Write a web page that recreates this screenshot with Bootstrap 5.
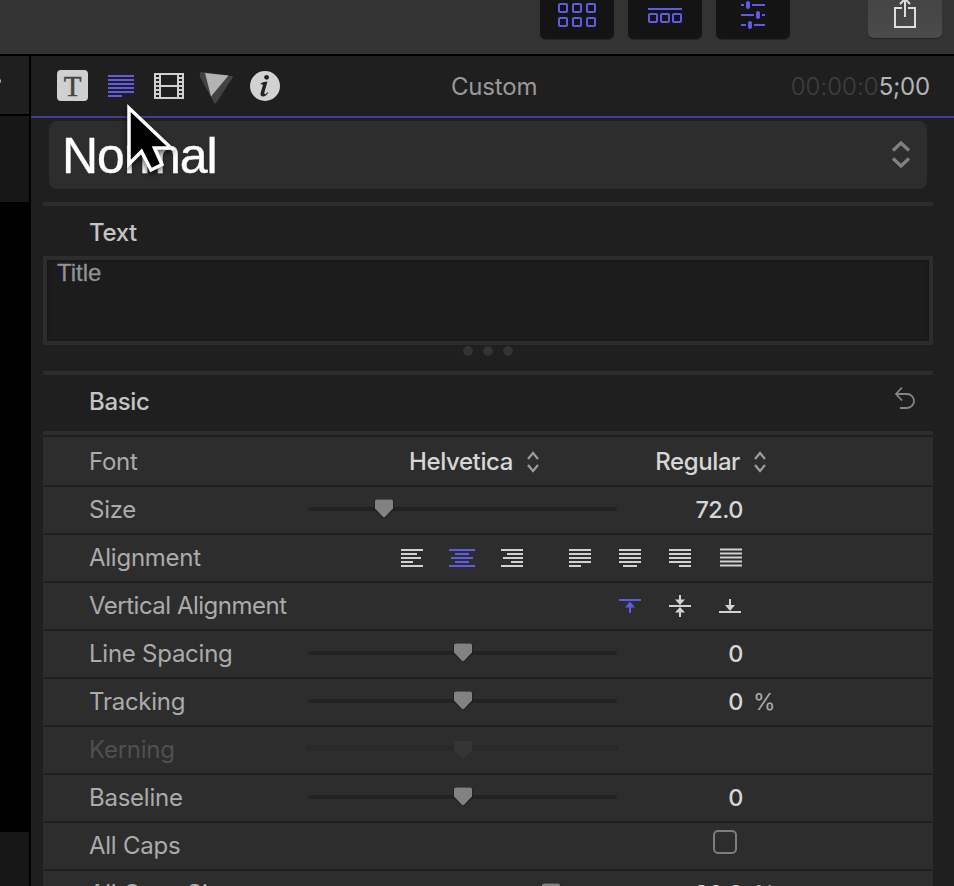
<!DOCTYPE html>
<html lang="en" data-bs-theme="dark">
<head>
<meta charset="utf-8">
<meta name="viewport" content="width=device-width, initial-scale=1">
<title>Title Inspector</title>
<link href="https://cdn.jsdelivr.net/npm/bootstrap@5.3.0/dist/css/bootstrap.min.css" rel="stylesheet">
<style>
  :root { --accent:#5e5ce6; --panel:#1f1f1f; --row:#2d2d2d; --label:#ababab; --bright:#d6d6d6; }
  body { font-family:Inter,"Liberation Sans",sans-serif; font-size:24px; line-height:30px; background:#000; color:var(--label); height:886px; }
  svg { display:block; flex:none; }
  .app { height:886px; }
  .workarea { min-height:0; }
  .topbar { height:56px; background:#333; border-bottom:2px solid #000; padding-right:12px; gap:14px; }
  .tool { width:74px; height:40px; padding:0; border:0; border-radius:0 0 6px 6px; background:#141414; border-bottom:1px solid #252525; color:var(--accent); }
  .tool-share { margin-left:64px; height:39px; background:linear-gradient(#444,#4b4b4b); border-bottom:1px solid #222; color:#ddd; }
  .side { width:31px; border-right:2px solid #000; }
  .side-head { height:60px; background:var(--panel); border-bottom:2px solid #000; }
  .side-strip { height:86px; background:#171717; }
  .side-foot { height:54px; background:#171717; }
  .inspector { background:var(--panel); }
  .tabs { height:62px; border-bottom:2px solid #413f94; padding-left:18px; }
  .tabs-title { letter-spacing:-.2px; margin-left:162px; padding-top:2px; color:#999; }
  .timecode { letter-spacing:.05px; color:#404040; font-weight:300; padding:2px 24px 0 0; }
  .timecode span { letter-spacing:-.2px; color:#b4b4b4; font-weight:400; }
  .preset { margin:3px 27px 13px 18px; height:68px; border-radius:8px; background:var(--row); padding:0 16px 0 13px; color:#fff; font:50px/68px "Liberation Sans",Arial,sans-serif; letter-spacing:-1.1px; }
  .preset span { padding-top:1px; -webkit-text-stroke:.4px #fff; }
  .content { margin:0 21px 0 12px; }
  .rule { height:4px; background:var(--row); }
  .heading { padding:12px 0 0 46px; color:#c4c4c4; font-weight:500; letter-spacing:-.35px; }
  .heading-text { height:50px; }
  .heading-basic { height:56px; }
  .heading svg { margin-top:-1px; }
  .editor { height:89px; border:4px solid var(--row); background:#1c1c1c; box-shadow:inset 0 0 3px #111; padding-left:10px; color:#929292; font:24px/25px "Liberation Sans",Arial,sans-serif; -webkit-text-stroke:.3px #929292; }
  .grip { height:26px; gap:10px; padding-top:1px; }
  .grip i { width:10px; height:10px; border-radius:50%; background:#333; }
  .prop { height:46px; margin-bottom:2px; background:var(--row); display:grid; grid-template-columns:219px 309px 125px 1fr; padding-left:46px; align-items:center; }
  .prop-font { height:48px; margin-top:2px; padding-top:1px; }
  .prop > .name { white-space:nowrap; letter-spacing:-.25px; }
  .prop > .name-long { letter-spacing:-.5px; }
  .val { text-align:right; color:var(--bright); font-weight:500; font-size:23.5px; letter-spacing:-.5px; margin-right:-1px; }
  .unit { padding-left:11px; font-size:23px; }
  .pick { color:var(--bright); font-weight:500; letter-spacing:-.4px; }
  .pick svg { margin-left:14px; }
  .picks { grid-column:2 / span 3; padding:0 167px 0 101px; }
  .icons { grid-column:2 / span 3; padding-left:79px; color:#d2d2d2; }
  .icons-v { padding-left:297px; }
  .icons .gap18 { margin-left:18px; }
  .icons .on { color:var(--accent); }
  .slide { position:relative; height:4px; margin-top:-2px; border-radius:2px; background:#222; }
  .slide svg { position:absolute; top:-9px; margin-left:-11px; color:#828282; }
  .off .name { color:#505050; }
  .off .slide { background:#292929; height:6px; margin:-4px -2px 0; border-radius:3px; }
  .off .slide svg { color:#353535; top:-5px; }
  .box { width:24px; height:24px; border:2px solid #7d7d7d; border-radius:5px; justify-self:end; margin:-8px 5px 0 0; }
  .pointer { position:absolute; left:117px; top:95px; filter:drop-shadow(0 3px 3px rgba(0,0,0,.65)); }
</style>
<script src="https://cdn.jsdelivr.net/npm/bootstrap@5.3.0/dist/js/bootstrap.bundle.min.js"></script>
</head>
<body class="overflow-hidden">
<svg width="0" height="0" class="position-absolute">
  <symbol id="knob" viewBox="0 0 22 22"><path d="M3.500 1h15q2 0 2 2v8.500L13 19.200q-2 1.800-4 0L1.500 11.500V3q0-2 2-2Z" fill="#1b1b1b"/><path d="M3.500 1.500h15q1.500 0 1.500 1.500v7.500L12.200 18.800q-1.200 1-2.400 0L2 10.500V3q0-1.500 1.500-1.500Z" fill="currentColor"/></symbol>
  <symbol id="updown" viewBox="0 0 12 22"><path d="M1 8 6 2l5 6M1 14l5 6 5-6" fill="none" stroke="#9c9c9c" stroke-width="2.200"/></symbol>
</svg>
<div class="app d-flex flex-column position-relative overflow-hidden">
  <header class="topbar d-flex justify-content-end align-items-start flex-shrink-0">
    <button class="btn tool"><svg width="74" height="39" fill="none" stroke="currentColor" stroke-width="2"><rect x="19" y="4" width="8" height="8" rx="1"/><rect x="33" y="4" width="8" height="8" rx="1"/><rect x="47" y="4" width="8" height="8" rx="1"/><rect x="19" y="18" width="8" height="8" rx="1"/><rect x="33" y="18" width="8" height="8" rx="1"/><rect x="47" y="18" width="8" height="8" rx="1"/></svg></button>
    <button class="btn tool"><svg width="74" height="39" fill="none" stroke="currentColor" stroke-width="2"><path d="M20 9h34"/><rect x="21" y="14" width="8" height="8" rx="1"/><rect x="33" y="14" width="8" height="8" rx="1"/><rect x="45" y="14" width="8" height="8" rx="1"/></svg></button>
    <button class="btn tool"><svg width="74" height="39" stroke="currentColor"><path stroke-width="2" d="M25 5h3m8 0h13M25 15h13m8 0h3M25 25h5m8 0h11"/><path stroke-width="4" stroke-linecap="round" d="M32 3v4M42 13v4M34 23v4"/></svg></button>
    <button class="btn tool tool-share"><svg width="74" height="38" fill="none" stroke="currentColor" stroke-width="2"><path d="M34 8h-7v19h20V8h-7M37 17V0M32 4l5-5 5 5"/></svg></button>
  </header>
  <div class="workarea d-flex flex-grow-1">
    <aside class="side flex-shrink-0 d-flex flex-column">
      <div class="side-head"><svg width="4" height="58"><path d="M0 23.500h1v3H0Z" fill="#aaa"/></svg></div>
      <div class="side-strip"></div>
      <div class="side-foot mt-auto"></div>
    </aside>
    <main class="inspector flex-grow-1">
      <nav class="tabs d-flex align-items-center">
        <svg width="48" height="48"><rect x="8" y="8" width="31" height="31" rx="4" fill="#d0d0d0"/><text x="23.500" y="34" font-family="Liberation Serif,serif" font-size="29" text-anchor="middle" fill="#444" stroke="#444" stroke-width=".5">T</text></svg>
        <svg width="48" height="48"><path d="M11 14h26M11 18h26M11 22h26M11 26h26M11 30h26M11 34h14" stroke="#5e5ce6" stroke-width="2"/></svg>
        <svg width="48" height="48" fill="none" stroke="#d0d0d0"><rect x="10" y="12" width="28" height="24" stroke-width="2"/><path d="M15 11v26M33 11v26M15 24h18" stroke-width="2"/><path d="M12 11v26M36 11v26" stroke-width="4" stroke-dasharray="2 2"/></svg>
        <svg width="48" height="48"><path d="M9 10 39 14q1.500.2.700 1.500L23.500 40.500q-1.500 2-2.500 0L7 15q-1-5 2-5Z" fill="#424242"/><path d="M12 11 35.500 13.500 18 34.500Z" fill="#b3b3b3"/></svg>
        <svg width="48" height="48"><circle cx="24" cy="24" r="15" fill="#d2d2d2"/><circle cx="25.600" cy="15.300" r="2.400" fill="#222"/><path d="M19.500 21.500q3-2 7-2l-3 10.500q-.6 2.500.8 2.200 1-.3 2.200-2l.8.600q-2.600 3.900-5.600 3.600-2.900-.4-2-3.700l2.200-7.700q.2-1.100-2.200-.8Z" fill="#222"/></svg>
        <span class="tabs-title">Custom</span>
        <span class="timecode ms-auto">00:00:0<span>5;00</span></span>
      </nav>
      <div class="preset d-flex align-items-center justify-content-between"><span>Normal</span>
        <svg width="20" height="30" fill="none" stroke="#808080" stroke-width="3.300"><path d="m2 10.500 8-7.500 8 7.500M2 18.500l8 7.500 8-7.500"/></svg></div>
      <div class="content">
        <div class="rule"></div>
        <div class="heading heading-text">Text</div>
        <div class="editor">Title</div>
        <div class="grip d-flex justify-content-center"><i></i><i></i><i></i></div>
        <div class="rule"></div>
        <div class="heading heading-basic d-flex justify-content-between">Basic
          <svg width="40" height="30" fill="none" stroke="#858585" stroke-width="1.800"><path d="m9 1.500-6 6.500 6 6.500M3 8h11a6.500 6.500 0 0 1 0 14H7"/></svg></div>
        <div class="rule"></div>
        <div class="prop prop-font"><span class="name">Font</span><div class="picks d-flex justify-content-between"><span class="pick d-flex align-items-center">Helvetica<svg width="12" height="22"><use href="#updown"/></svg></span><span class="pick d-flex align-items-center">Regular<svg width="12" height="22"><use href="#updown"/></svg></span></div></div>
        <div class="prop"><span class="name">Size</span><div class="slide"><svg width="22" height="22" style="left:24.600%"><use href="#knob"/></svg></div><span class="val">72.0</span></div>
        <div class="prop"><span class="name">Alignment</span><div class="icons d-flex">
          <svg width="50" height="24" stroke="currentColor" stroke-width="2"><path d="M14 4h22M14 8h16M14 12h20M14 16h12M14 20h22"/></svg>
          <svg class="on" width="50" height="24" stroke="currentColor" stroke-width="2"><path d="M12 4h26M18 8h14M14 12h22M18 16h14M12 20h26"/></svg>
          <svg width="50" height="24" stroke="currentColor" stroke-width="2"><path d="M14 4h22M20 8h16M16 12h20M24 16h12M14 20h22"/></svg>
          <svg class="gap18" width="50" height="24" stroke="currentColor" stroke-width="2"><path d="M14 4h22M14 8h22M14 12h22M14 16h22M14 20h12"/></svg>
          <svg width="50" height="24" stroke="currentColor" stroke-width="2"><path d="M14 4h22M14 8h22M14 12h22M14 16h22M18 20h14"/></svg>
          <svg width="50" height="24" stroke="currentColor" stroke-width="2"><path d="M14 4h22M14 8h22M14 12h22M14 16h22M24 20h12"/></svg>
          <svg width="50" height="24" stroke="currentColor" stroke-width="2"><path d="M15 3.500h22M15 7.500h22M15 11.500h22M15 15.500h22M15 19.500h22"/></svg></div></div>
        <div class="prop"><span class="name name-long">Vertical Alignment</span><div class="icons icons-v d-flex">
          <svg class="on" width="50" height="24" stroke="currentColor" stroke-width="2"><path d="M14 6h22M25 19v-8"/><path d="m25 7.500 5 6h-10Z" fill="currentColor" stroke="none"/></svg>
          <svg width="50" height="24" stroke="currentColor" stroke-width="2"><path d="M14 12h22M25 1v5M25 23v-5"/><path d="m25 11-5-5.500h10ZM25 13l-5 5.500h10Z" fill="currentColor" stroke="none"/></svg>
          <svg width="50" height="24" stroke="currentColor" stroke-width="2"><path d="M14 18h22M25 5v7"/><path d="m25 17-5-6h10Z" fill="currentColor" stroke="none"/></svg></div></div>
        <div class="prop"><span class="name">Line Spacing</span><div class="slide"><svg width="22" height="22" style="left:50.200%"><use href="#knob"/></svg></div><span class="val">0</span></div>
        <div class="prop"><span class="name">Tracking</span><div class="slide"><svg width="22" height="22" style="left:50.200%"><use href="#knob"/></svg></div><span class="val">0</span><span class="unit">%</span></div>
        <div class="prop off"><span class="name">Kerning</span><div class="slide"><svg width="22" height="22" style="left:50.200%"><path d="M2 1h18v9l-9 9-9-9Z" fill="currentColor"/></svg></div></div>
        <div class="prop"><span class="name">Baseline</span><div class="slide"><svg width="22" height="22" style="left:50.200%"><use href="#knob"/></svg></div><span class="val">0</span></div>
        <div class="prop"><span class="name">All Caps</span><span></span><span class="box"></span></div>
        <div class="prop"><span class="name">All Caps Size</span><div class="slide"><svg width="22" height="22" style="left:78.600%"><use href="#knob"/></svg></div><span class="val">80.0</span><span class="unit">%</span></div>
      </div>
    </main>
  </div>
  <svg class="pointer" width="70" height="90"><path d="M12 13V69L24.500 56.500 34 75l11-5.500L37.500 53H54Z" fill="#000" stroke="#fff" stroke-width="3.500"/></svg>
</div>
</body>
</html>
